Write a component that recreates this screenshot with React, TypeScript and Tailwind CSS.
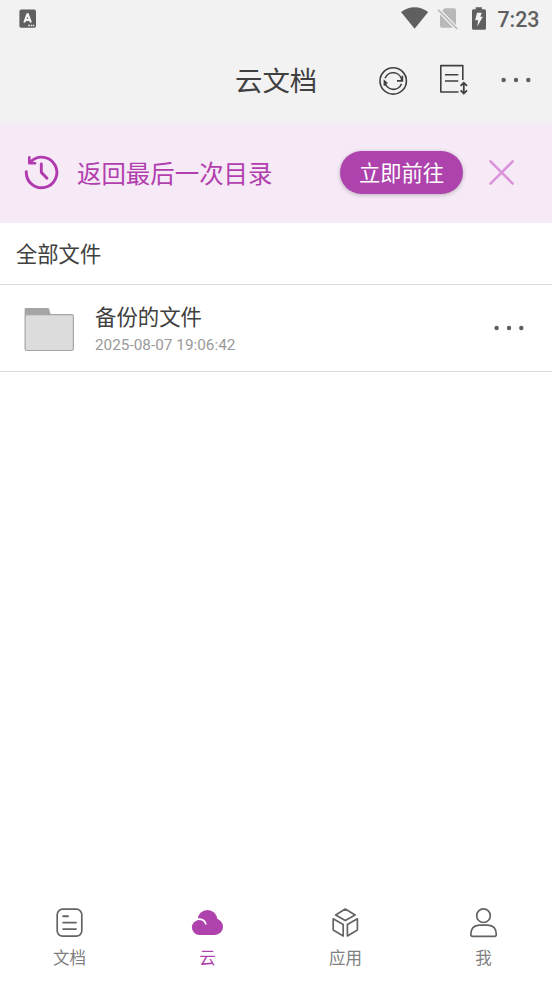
import type { ReactNode } from "react";

const cjk = "font-['Noto_Sans_CJK_SC',sans-serif]";

function StatusBar() {
  return (
    <div className="flex h-[38px] items-center pl-[19px] text-[#5f5f5f]">
      <svg width="18" height="20" viewBox="19 9 18 20" className="shrink-0">
        <rect x="19.4" y="9.6" width="16.6" height="18.2" rx="1.8" fill="currentColor" />
        <path d="M24.3 22.5 27.3 14.3H27.9L30.9 22.5M25.4 19.9H29.8" fill="none" stroke="#f4f4f4" strokeWidth="2.1" />
        <path d="M28.2 25.4h1.6M30.8 25.4h1.6M33.1 25.4h1.2" stroke="#f4f4f4" strokeWidth="1.5" />
      </svg>
      <div className="flex-1" />
      <svg width="88" height="26" viewBox="400 6 88 26" className="shrink-0">
        <path d="M401 12.1Q407.3 7.2 414.6 7.2 422 7.2 428.2 12.1L414.6 28.8Z" fill="currentColor" />
        <path d="M444.5 8.2H454Q456 8.2 456 10.2V25.2L442.2 10.9ZM440 14.2 452.8 27.8H442Q440 27.8 440 25.8Z" fill="#b8b8b8" />
        <path d="M438.2 9.8 457.2 29" stroke="#f2f2f2" strokeWidth="3.4" />
        <path d="M438.2 9.8 457.2 29" stroke="#b8b8b8" strokeWidth="1.7" />
        <path d="M475.7 7.2H481.9V9.2H484.4Q486 9.2 486 10.8V28.2Q486 29.7 484.4 29.7H473.5Q472 29.7 472 28.2V10.8Q472 9.2 473.5 9.2H475.7Z" fill="currentColor" />
        <path d="M477 12.8H481.8L480.3 16.8H482.8L477.2 26.8L478.2 20.3H475.2Z" fill="#f2f2f2" />
      </svg>
      <span className="ml-[9px] mr-[12.5px] pt-px font-[Roboto,sans-serif] text-[21.4px] font-medium leading-[37px]">7:23</span>
    </div>
  );
}

function Dots() {
  return (
    <svg width="32" height="8" viewBox="0 0 32 8" fill="#5e5e5e" className="shrink-0">
      <circle cx="3.6" cy="4" r="2.2" />
      <circle cx="16" cy="4" r="2.2" />
      <circle cx="28.3" cy="4" r="2.2" />
    </svg>
  );
}

function Header() {
  return (
    <header className="flex h-[85px] items-center pb-[2px] pl-[235px] pr-[20.5px]">
      <h1 className={`${cjk} w-[84px] whitespace-nowrap pb-[2px] text-[27.4px] leading-[40px] text-[#404040]`}>云文档</h1>
      <svg width="92" height="34" viewBox="378 62.5 92 34" fill="none" stroke="#404040" strokeWidth="1.6" className="ml-[59px] shrink-0">
        <circle cx="393.2" cy="80.4" r="13.2" />
        <path d="M385 77.8A8.7 8.7 0 0 1 401.8 80.2M397 80.4H402.4V75.2" />
        <path d="M401.5 83.4A8.7 8.7 0 0 1 384.8 81.2" />
        <path d="M384.4 85.2V80.4L387.4 83" strokeWidth="1.6" />
        <path d="M462.8 79.5V65.1H440.8V91.5H458.5" strokeLinejoin="round" />
        <path d="M445 74.3H458.3M445 80.5H458.3" />
        <path d="M463.8 82.5V92.8M460.6 85.4 463.8 82.2 467 85.4M460.6 89.9 463.8 93.1 467 89.9" strokeWidth="1.8" />
      </svg>
      <div className="ml-auto"><Dots /></div>
    </header>
  );
}

function Banner() {
  return (
    <section className="flex h-[100px] items-center bg-[#f6eaf7] pl-[24px]">
      <svg width="36" height="36" viewBox="24 155 36 36" fill="none" stroke="#b03aae" strokeWidth="2.9" strokeLinecap="round" className="shrink-0">
        <path d="M26.3 171.6A15.3 15.3 0 1 0 31 161.4" />
        <path d="M29.3 157.4V163.2H35.1" strokeWidth="2.6" strokeLinejoin="round" />
        <path d="M41.3 164V172.3L47 178.2" strokeWidth="2.9" />
      </svg>
      <span className={`${cjk} ml-[17px] w-[200px] whitespace-nowrap pb-px text-[24.45px] leading-[36px] text-[#b13fae]`}>返回最后一次目录</span>
      <button className={`${cjk} mb-[2px] ml-[63px] h-[43px] w-[123px] whitespace-nowrap rounded-full bg-[#ae43ad] pb-px text-[21.3px] leading-[42px] text-white shadow-[0_1px_4px_rgba(0,0,0,0.25)]`}>立即前往</button>
      <svg width="28" height="28" viewBox="0 0 28 28" stroke="#db93da" strokeWidth="2.6" strokeLinecap="round" className="mb-px ml-[24.5px] shrink-0">
        <path d="M2.5 2.4 24.7 24.6M24.7 2.4 2.5 24.6" />
      </svg>
    </section>
  );
}

function FileRow() {
  return (
    <div className="flex h-[87px] items-center border-b border-[#dcdcdc] pl-[24px] pr-[27px]">
      <svg width="51" height="46" viewBox="24 306 51 46" className="mt-[2px] shrink-0">
        <path d="M24.6 316V309Q24.6 307.9 25.8 307.9H47.7Q48.9 307.9 49.2 309L51 316Z" fill="#a5a5a5" />
        <rect x="25.1" y="314.6" width="48.3" height="35.9" rx="1.8" fill="#dcdcdc" stroke="#a5a5a5" strokeWidth="1.2" />
      </svg>
      <div className="ml-[20px] flex-1">
        <div className={`${cjk} text-[21.4px] leading-[30px] text-[#404040]`}>备份的文件</div>
        <div className="mt-[3px] pt-px font-[Roboto,sans-serif] text-[15.35px] leading-[20px] text-[#9a9a9a]">2025-08-07 19:06:42</div>
      </div>
      <Dots />
    </div>
  );
}

function NavItem({ label, active, children }: { label: string; active?: boolean; children: ReactNode }) {
  return (
    <div className={`flex flex-1 flex-col items-center ${active ? "text-[#ae43ad]" : "text-[#646464]"}`}>
      <svg width="36" height="36" viewBox="0 0 36 36" fill="none" stroke="currentColor" strokeWidth="1.7" strokeLinejoin="round">
        {children}
      </svg>
      <span className={`${cjk} ml-px mt-[4px] text-[16.5px] leading-[24px] ${active ? "" : "text-[#808080]"}`}>{label}</span>
    </div>
  );
}

function BottomNav() {
  return (
    <nav className="mt-auto flex h-[78px]">
      <NavItem label="文档">
        <rect x="6.2" y="4.2" width="24.6" height="27" rx="5.4" />
        <path d="M12.2 11.2H17M12.2 17.6H25M12.2 24.1H25" strokeWidth="1.9" strokeLinecap="round" />
      </NavItem>
      <NavItem label="云" active>
        <g fill="currentColor" stroke="none">
          <circle cx="18.5" cy="14.8" r="9.8" />
          <circle cx="10.4" cy="22.5" r="7.5" />
          <circle cx="25.8" cy="21.8" r="8.2" />
          <path d="M10.4 18H25.8V30H10.4Z" />
        </g>
        <path d="M7.4 14.3Q15 13.2 16.8 18.8" stroke="#fff" strokeWidth="1.8" strokeLinecap="round" />
      </NavItem>
      <NavItem label="应用">
        <path d="M8.6 10 18.3 4.1 28.1 10 18.3 15.6ZM6.2 13.8 16.2 19.6V30.9L6.2 25ZM30.4 13.8 20.4 19.6V30.9L30.4 25Z" />
      </NavItem>
      <NavItem label="我">
        <circle cx="18.5" cy="10.7" r="6.8" />
        <path d="M14.4 20.2H22.8Q31.3 20.6 31.3 29.6Q31.3 31.3 29.5 31.3H7.5Q5.8 31.3 5.8 29.6Q5.8 20.6 14.4 20.2Z" />
      </NavItem>
    </nav>
  );
}

export default function App() {
  return (
    <main className="flex h-[983px] w-[552px] flex-col overflow-hidden bg-white">
      <div className="bg-[#f2f2f2]">
        <StatusBar />
        <Header />
      </div>
      <Banner />
      <h2 className={`${cjk} h-[62px] border-b border-[#dcdcdc] pl-[16px] text-[21.3px] leading-[59px] text-[#404040]`}>全部文件</h2>
      <FileRow />
      <BottomNav />
    </main>
  );
}
